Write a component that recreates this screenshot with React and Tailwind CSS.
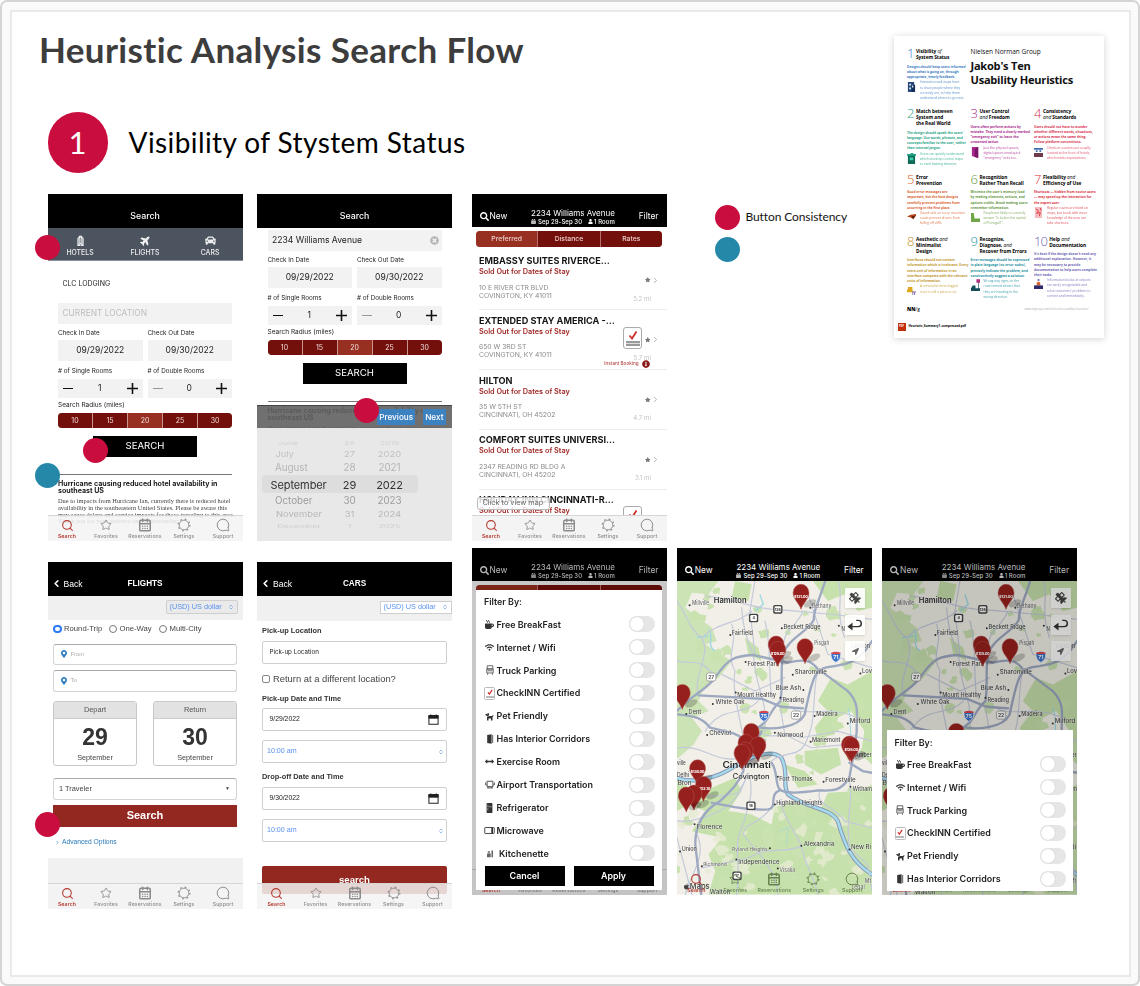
import React from "react";
import { Search, Star, CalendarDays, MessageCircle, ChevronLeft, ChevronRight, ChevronsUpDown } from "lucide-react";
import {
  FaSearch, FaPlane, FaCar, FaStar, FaCalendarAlt, FaUser, FaMugHot, FaWifi, FaDog,
  FaArrowsAltH, FaMapMarkerAlt, FaLocationArrow, FaSatellite, FaInfoCircle, FaApple, FaTimesCircle,
} from "react-icons/fa";

const Marker = ({ className }) => (
  <div className={`absolute z-20 size-[25px] rounded-full ${className}`} />
);

const Phone = ({ children, className = "", markers, font = "font-[Inter,sans-serif]" }) => (
  <div className="relative shrink-0">
    <div className={`relative flex h-[347px] w-[195px] flex-col overflow-hidden text-[#222] blur-[0.3px] ${font} ${className}`}>{children}</div>
    {markers}
  </div>
);

const Gear = () => (
  <svg viewBox="0 0 24 24" className="size-[14px]" fill="none" stroke="currentColor">
    <circle cx="12" cy="12" r="8.3" strokeWidth="1.5" />
    <circle cx="12" cy="12" r="10" strokeWidth="2" strokeDasharray="3 4.85" />
  </svg>
);

const TabBar = ({ className = "bg-[#f3f3f3]/85 text-[#8c8c8c]", border = "border-[#d5d5d5]" }) => {
  const tabs = [
    ["Search", <Search className="size-[13px]" strokeWidth={2} />],
    ["Favorites", <Star className="size-[12px]" strokeWidth={1.8} />],
    ["Reservations", <CalendarDays className="size-[14px]" strokeWidth={2.6} />],
    ["Settings", <Gear />],
    ["Support", <MessageCircle className="size-[14px] -scale-x-100" strokeWidth={1.7} />],
  ];
  return (
    <div className={`absolute bottom-0 left-0 grid h-[26px] w-[195px] grid-cols-5 border-t font-[Inter,sans-serif] ${border} ${className}`}>
      {tabs.map(([label, icon], i) => (
        <div key={label} className={`flex flex-col items-center pt-[2.500px] ${i === 0 ? "text-[#b5392f]" : ""}`}>
          <div className="flex h-[14px] items-center">{icon}</div>
          <div className={`text-[5.2px] leading-[8px] tracking-[0.1px] ${i === 0 ? "font-semibold" : "font-medium"}`}>{label}</div>
        </div>
      ))}
    </div>
  );
};

const PlainHeader = ({ title, back, bold }) => (
  <div className="relative flex h-[34px] shrink-0 items-end justify-center bg-black pb-[4.500px] text-white">
    {back && (
      <div className="absolute bottom-[5px] left-[3px] flex items-center text-[8.6px] leading-[14px]">
        <ChevronLeft className="size-[11px]" strokeWidth={3.5} />
        <span className="ml-[2px]">Back</span>
      </div>
    )}
    <div className={`leading-[14px] ${bold ? "text-[8.2px] font-semibold" : "text-[8.800px] font-medium"}`}>{title}</div>
  </div>
);

const TripHeader = ({ dim }) => (
  <div className="h-[33.5px] shrink-0 bg-black">
    <div className={`flex h-full items-end justify-between px-[8px] pb-[2px] ${dim ? "text-[#b9b9b9]" : "text-white"}`}>
      <div className="mb-[2.500px] flex w-[34px] items-center text-[8.4px] leading-[13px]">
        <FaSearch className="size-[9px]" />
        <span className="ml-[1px]">New</span>
      </div>
      <div className="text-center">
        <div className="text-[8px] leading-[9px] whitespace-nowrap">2234 Williams Avenue</div>
        <div className="flex items-center justify-center text-[6px] leading-[7px] font-medium tracking-[0.05px] whitespace-nowrap">
          <FaCalendarAlt className="mr-[2px] size-[5px]" />
          Sep 29-Sep 30
          <FaUser className="ml-[6px] mr-[1px] size-[5px]" />1 Room
        </div>
      </div>
      <div className="mb-[2.500px] w-[26px] text-right text-[8.4px] leading-[13px]">Filter</div>
    </div>
  </div>
);

const Stepper = ({ value, dimMinus }) => (
  <div className="flex h-[19.5px] w-[84.5px] items-center justify-between bg-[#f2f2f2] px-[5px]">
    <div className={`h-[1.3px] w-[10px] ${dimMinus ? "bg-[#999]" : "bg-[#111]"}`} />
    <div className="text-[8.5px]">{value}</div>
    <svg className="size-[11px]" viewBox="0 0 11 11"><path d="M5.5 0v11M0 5.5h11" stroke="#111" strokeWidth="1.6" /></svg>
  </div>
);

const SearchForm = ({ location }) => (
  <div className="px-[10.5px]">
    {location ? (
      <div className="flex h-[21.5px] items-center justify-between bg-[#f2f2f2] pt-px pr-[3px] pl-[4.5px] text-[8.600px]">
        2234 Williams Avenue
        <FaTimesCircle className="size-[9px] text-[#b5b5b5]" />
      </div>
    ) : (
      <div className="flex h-[21.5px] items-center bg-[#f2f2f2] pt-px pl-[4.5px] text-[8.4px] text-[#bdbdbd]">CURRENT LOCATION</div>
    )}
    <div className="grid h-[15.5px] grid-cols-2 items-center gap-[5px] pt-[3px] text-[6.3px]"><span>Check In Date</span><span>Check Out Date</span></div>
    <div className="grid grid-cols-2 gap-[5px] text-center text-[8.5px] leading-[21px]">
      <div className="h-[21px] bg-[#f2f2f2]">09/29/2022</div>
      <div className="h-[21px] bg-[#f2f2f2]">09/30/2022</div>
    </div>
    <div className="grid h-[18px] grid-cols-2 items-center gap-[5px] pt-[4.500px] text-[6.3px]"><span># of Single Rooms</span><span># of Double Rooms</span></div>
    <div className="grid grid-cols-2 gap-[5px]"><Stepper value="1" /><Stepper value="0" dimMinus /></div>
    <div className="flex h-[15px] items-center pt-[1px] text-[6.5px]">Search Radius (miles)</div>
    <div className="grid h-[15px] grid-cols-5 gap-px overflow-hidden rounded-[4px] bg-[#c9958f] text-center text-[7px] leading-[15px] text-[#f0dcd9]">
      {[10, 15, 20, 25, 30].map((n) => (
        <div key={n} className={n === 20 ? "bg-[#983022]" : "bg-[#74100b]"}>{n}</div>
      ))}
    </div>
    <div className="mx-auto mt-[7.500px] flex h-[21px] w-[104px] items-center justify-center bg-black pt-px text-[9.6px] text-white">SEARCH</div>
    <div className="mt-[17.5px] h-px bg-[#777]" />
    <div className="mt-[4.500px] text-[7.05px] leading-[7.800px] font-bold whitespace-nowrap">Hurricane causing reduced hotel availability in<br />southeast US</div>
    <div className="mt-[3px] font-['Liberation_Serif',serif] text-[6.4px] leading-[6.8px] whitespace-nowrap text-[#444]">
      Due to impacts from Hurricane Ian, currently there is reduced hotel<br />
      availability in the southeastern United States. Please be aware this<br />
      may cause delays and service impacts for those traveling to this area.<br />
      Thank you for your patience and understanding.
    </div>
  </div>
);

const HotelsScreen = () => (
  <Phone
    className="bg-white"
    markers={<><Marker className="top-[41px] left-[-13px] bg-[#c90d3f]" /><Marker className="top-[244px] left-[35px] bg-[#c90d3f]" /><Marker className="top-[269px] left-[-12.5px] bg-[#2588a8]" /></>}
  >
    <PlainHeader title="Search" />
    <div className="grid h-[33.5px] shrink-0 grid-cols-3 border-b border-[#8b9198] bg-[#4b545f] text-center text-[6.9px] leading-[9px] font-medium text-[#eee]">
      <div className="flex flex-col items-center gap-[2px] pt-[7.500px]">
        <svg viewBox="0 0 10 14" className="h-[11px] w-[9px]"><path d="M1 14V4L3 2V1h4v1l2 2v10Z" fill="#eee" /><path d="M3 4v8M5 3v7M7 4v8M5 11.500v2.500" stroke="#4b545f" strokeWidth=".7" /></svg>
        HOTELS
      </div>
      <div className="flex flex-col items-center gap-[2px] pt-[7.500px]"><FaPlane className="size-[11px] -rotate-45" />FLIGHTS</div>
      <div className="flex flex-col items-center gap-[2px] pt-[7.500px]"><FaCar className="size-[11px]" />CARS</div>
    </div>
    <div className="h-[41.5px] shrink-0 pt-[17.500px] pl-[15px] text-[7px] leading-[10px]">CLC LODGING</div>
    <SearchForm />
    <TabBar />
  </Phone>
);

const PICKER = [
  ["June", 26, 2019, "h-[9px] text-[8.6px] text-[#d3d3d3] scale-y-[0.6]", "pl-[21px]"],
  ["July", 27, 2020, "h-[13px] text-[9.4px] text-[#c2c2c2] scale-y-[0.85]", "pl-[18.500px]"],
  ["August", 28, 2021, "h-[15px] text-[9.8px] text-[#b4b4b4]", "pl-[18px]"],
  ["September", 29, 2022, "h-[18px] text-[11px] text-[#333] tracking-[-0.1px]", "pl-[13.500px]"],
  ["October", 30, 2023, "h-[14.500px] text-[9.8px] text-[#9c9c9c]", "pl-[18px]"],
  ["November", 31, 2024, "h-[13px] text-[9.4px] text-[#b6b6b6] scale-y-[0.8]", "pl-[19px]"],
  ["December", 1, 2025, "h-[8px] text-[8.8px] text-[#cdcdcd] scale-y-[0.5]", "pl-[20.500px]"],
];

const DateScreen = () => (
  <Phone className="bg-white" markers={<Marker className="top-[204px] left-[96.500px] bg-[#c90d3f]" />}>
    <PlainHeader title="Search" />
    <div className="h-[2px] shrink-0" />
    <SearchForm location />
    <div className="absolute bottom-0 left-0 flex h-[136px] w-[195px] flex-col">
      <div className="flex h-[23.5px] shrink-0 items-center justify-end gap-[8px] border-t border-[#444] bg-[#606060]/90 pr-[6.5px] text-[8.2px] font-medium text-white">
        <div className="bg-[#3c82c1] px-[2px] leading-[16px]">Previous</div>
        <div className="bg-[#3c82c1] px-[2px] leading-[16px]">Next</div>
      </div>
      <div className="relative flex flex-1 flex-col bg-[#e8e8e8] pt-[11px]">
        <div className="absolute top-[47px] left-[5px] h-[18px] w-[156px] rounded-[4px] bg-[#dddddd]" />
        {PICKER.map(([m, d, y, cls, pl]) => (
          <div key={m} className={`relative flex shrink-0 items-center ${cls}`}>
            <span className={`w-[80px] ${pl}`}>{m}</span>
            <span className="w-[25px] text-center">{d}</span>
            <span className="w-[55px] text-center">{y}</span>
          </div>
        ))}
      </div>
    </div>
  </Phone>
);

const Badge = ({ className = "" }) => (
  <div className={`flex h-[22px] w-[19px] flex-col items-center justify-between rounded-[3px] border border-[#aaa] bg-white pt-[2px] pb-[2px] ${className}`}>
    <svg viewBox="0 0 10 10" className="size-[10px]"><path d="M1.500 5.500L4 8.500L8.500 1.500" fill="none" stroke="#cf2a27" strokeWidth="1.8" /></svg>
    <div className="h-[5px] w-[14px] border-y-2 border-[#999] bg-[#ddd]" />
  </div>
);

const HOTELS = [
  ["EMBASSY SUITES RIVERCE...", "10 E RIVER CTR BLVD", "COVINGTON, KY 41011", "5.2 mi"],
  ["EXTENDED STAY AMERICA -...", "650 W 3RD ST", "COVINGTON, KY 41011", "5.7 mi", true],
  ["HILTON", "35 W 5TH ST", "CINCINNATI, OH 45202", "4.7 mi"],
  ["COMFORT SUITES UNIVERSI...", "2347 READING RD BLDG A", "CINCINNATI, OH 45202", "3.1 mi"],
  ["HOLIDAY INN CINCINNATI-R...", "", "", "", true],
];

const ListScreen = () => (
  <Phone className="bg-white">
    <TripHeader />
    <div className="mx-[4.5px] mt-[3.500px] grid h-[16px] shrink-0 grid-cols-3 gap-px overflow-hidden rounded-[4px] bg-[#b5706a] text-center text-[6.8px] leading-[16px] font-medium text-[#eccfcc]">
      <div className="bg-[#983022]">Preferred</div><div className="bg-[#74100b]">Distance</div><div className="bg-[#74100b]">Rates</div>
    </div>
    <div className="mt-[4px] ml-[7.5px]">
      {HOTELS.map(([name, a1, a2, mi, badge]) => (
        <div key={name} className="relative h-[59.8px] border-b border-[#ececec] pt-[4.500px] whitespace-nowrap">
          <div className="text-[9.15px] leading-[12px] font-bold text-[#151515]">{name}</div>
          <div className="text-[7.3px] leading-[10px] font-semibold text-[#a02c28]">Sold Out for Dates of Stay</div>
          <div className="mt-[6.500px] text-[6.8px] leading-[8px] text-[#8a8a8a]">{a1}<br />{a2}</div>
          {badge && <Badge className="absolute top-[16.500px] left-[144px]" />}
          {mi && (
            <>
              <div className="absolute top-[25px] right-[7px] flex items-center text-[#999]">
                <FaStar className="size-[5.500px] text-[#777]" /><ChevronRight className="size-[9px]" strokeWidth={2} />
              </div>
              <div className="absolute top-[43px] right-[15.5px] text-[6.2px] leading-[9px] text-[#c4c4c4]">{mi}</div>
            </>
          )}
          {badge && mi && (
            <div className="absolute top-[50px] right-[17px] flex items-center gap-[3px] text-[4.6px] leading-[8px] font-medium text-[#b34a47]">
              Instant Booking <FaInfoCircle className="size-[8px] text-[#8b1a16]" />
            </div>
          )}
        </div>
      ))}
    </div>
    <div className="absolute top-[303.500px] left-[5px] flex h-[12.500px] w-[73.5px] items-center rounded-[3px] border border-[#bbb] bg-white/80 pl-[5px] text-[7.3px] whitespace-nowrap text-[#666]">Click to view map</div>
    <TabBar className="bg-[#f4f4f4] text-[#8c8c8c]" />
  </Phone>
);

const DateCard = ({ label, day }) => (
  <div className="flex h-[65.5px] w-[84px] flex-col items-center rounded-[3px] border border-[#c9c9c9] bg-white">
    <div className="w-full border-b border-[#ccc] bg-[#e2e2e2] text-center text-[7.4px] leading-[16px] text-[#555]">{label}</div>
    <div className="mt-[5px] text-[23px] leading-[26px] font-bold text-[#333]">{day}</div>
    <div className="text-[7.3px] leading-[16px] text-[#444]">September</div>
  </div>
);

const Radio = ({ label, on, className = "" }) => (
  <div className={`flex items-center gap-[2.500px] text-[7.7px] whitespace-nowrap text-[#444] ${className}`}>
    <span className={`size-[8.5px] shrink-0 rounded-full ${on ? "border-[2.6px] border-[#2f7af5]" : "border border-[#777]"}`} />
    {label}
  </div>
);

const ARIAL = "font-['Liberation_Sans',sans-serif]";

const FlightsScreen = () => (
  <Phone className="bg-white" font={ARIAL} markers={<Marker className="top-[250.5px] left-[-12.5px] bg-[#c90d3f]" />}>
    <PlainHeader title="FLIGHTS" back bold />
    <div className="flex h-[24.5px] shrink-0 justify-end bg-[#f0f0f0] pt-[4.500px] pr-[5px]">
      <div className="flex h-[14px] w-[72px] items-center justify-between rounded-[2px] border border-[#cfcfcf] bg-[#eaeaea] pr-[3px] pl-[3px] text-[7.3px] text-[#5b91ee]">
        (USD) US dollar <ChevronsUpDown className="size-[6px]" strokeWidth={2.500} />
      </div>
    </div>
    <div className="flex h-[23.5px] shrink-0 pb-[6px] pl-[5.5px]">
      <Radio label="Round-Trip" on className="w-[55.5px]" />
      <Radio label="One-Way" className="w-[50px]" />
      <Radio label="Multi-City" />
    </div>
    <div className="flex flex-col px-[5.5px]">
      {["From", "To"].map((t) => (
        <div key={t} className="mb-[5px] flex h-[21.5px] items-center gap-[2.500px] rounded-[3px] border border-t-[1.500px] border-[#d4d4d4] border-t-[#aaa] pl-[6px] text-[5.8px] text-[#aaa]">
          <FaMapMarkerAlt className="size-[8px] text-[#2f7fc0]" />{t}
        </div>
      ))}
      <div className="mt-[4px] flex justify-between"><DateCard label="Depart" day="29" /><DateCard label="Return" day="30" /></div>
      <div className="mt-[12px] flex h-[21.5px] items-center justify-between rounded-[3px] border border-t-[1.500px] border-[#d4d4d4] border-t-[#aaa] pr-[6px] pl-[5px] text-[7.4px] text-[#444]">
        1 Traveler<span className="text-[5px]">▼</span>
      </div>
      <div className="mt-[5px] flex h-[22px] items-center justify-center bg-[#92281f] text-[11px] font-bold text-white">Search</div>
      <div className="mt-[12px] flex h-[8px] items-center gap-[2px] pl-[2px] text-[6.7px] text-[#2a7ab8]"><ChevronRight className="size-[5px]" strokeWidth={3} />Advanced Options</div>
    </div>
    <div className="mt-[11px] flex-1 bg-[#f1f1f1]" />
    <TabBar />
  </Phone>
);

const Field = ({ children, className = "" }) => (
  <div className={`flex h-[23px] items-center justify-between rounded-[2px] border border-[#cfcfcf] ${className}`}>{children}</div>
);
const Label = ({ children, className = "" }) => (
  <div className={`flex items-center text-[7.4px] font-bold text-[#333] ${className}`}>{children}</div>
);
const TimeField = ({ className }) => (
  <Field className={`pr-[2.500px] pl-[4px] text-[7.1px] text-[#5b91ee] ${className}`}>10:00 am<ChevronsUpDown className="size-[6px]" strokeWidth={2.500} /></Field>
);
const CalIcon = () => (
  <svg viewBox="0 0 12 12" className="size-[11px]"><path d="M1 2h10v9.200H1Z" fill="none" stroke="#222" strokeWidth="1.100" /><path d="M1 1.700h10v2.800H1ZM3 .4v2M9 .4v2" fill="#222" stroke="#222" /></svg>
);

const CarsScreen = () => (
  <Phone className="bg-white" font={ARIAL}>
    <PlainHeader title="CARS" back bold />
    <div className="flex h-[25px] shrink-0 justify-end bg-[#f0f0f0] pt-[5px]">
      <div className="flex h-[13.5px] w-[72.5px] items-center justify-between border border-[#cfcfcf] bg-white px-[3px] text-[7.3px] text-[#5b91ee]">
        (USD) US dollar <ChevronsUpDown className="size-[6px]" strokeWidth={2.500} />
      </div>
    </div>
    <div className="px-[5px]">
      <Label className="h-[20px] pt-px">Pick-up Location</Label>
      <Field className="pl-[6.500px] font-[Inter,sans-serif] text-[6.2px]">Pick-up Location</Field>
      <div className="flex h-[31px] items-center gap-[3px] text-[9.4px] whitespace-nowrap text-[#444]"><span className="size-[8px] rounded-[2px] border border-[#888]" />Return at a different location?</div>
      <Label className="h-[13.500px] pb-[5px]">Pick-up Date and Time</Label>
      <Field className="pr-[7px] pl-[6.500px] text-[6.8px]">9/29/2022<CalIcon /></Field>
      <TimeField className="mt-[9px]" />
      <Label className="h-[24px] pt-[4px]">Drop-off Date and Time</Label>
      <Field className="pr-[7px] pl-[6.500px] text-[6.8px]">9/30/2022<CalIcon /></Field>
      <TimeField className="mt-[9px]" />
      <div className="mt-[24px] flex h-[28px] items-center justify-center rounded-[2px] bg-[#92281f] text-[9.6px] font-bold text-white">search</div>
    </div>
    <TabBar />
  </Phone>
);

const ic = "size-[9px] text-[#333]";
const FILTERS = [
  ["Free BreakFast", <FaMugHot className={ic} />],
  ["Internet / Wifi", <FaWifi className={ic} />],
  ["Truck Parking", <svg viewBox="0 0 10 12" className="h-[10px] w-[8px]" fill="none" stroke="#444"><path d="M1.500 .7h7v4h-7ZM1 4.700h8v5H1ZM2 7h6M2 10v2M8 10v2" /></svg>],
  ["CheckINN Certified", <div className="flex h-[13px] w-[11px] flex-col items-center rounded-[1.500px] border border-[#bbb] bg-white pt-px"><svg viewBox="0 0 10 10" className="size-[6px]"><path d="M1.500 5.500L4 8.500L8.500 1.500" fill="none" stroke="#cf2a27" strokeWidth="2" /></svg><div className="mt-px h-[2px] w-[8px] bg-[#bbb]" /></div>],
  ["Pet Friendly", <FaDog className="size-[9px] -scale-x-100 text-[#333]" />],
  ["Has Interior Corridors", <svg viewBox="0 0 10 12" className="h-[10px] w-[8px]"><path d="M1.500 1L7 0v12L1.500 11Z" fill="#333" /><path d="M7.500 1H9v10H7.500" fill="#777" /></svg>],
  ["Exercise Room", <FaArrowsAltH className={ic} />],
  ["Airport Transportation", <svg viewBox="0 0 12 12" className="size-[10px]" fill="none" stroke="#444" strokeWidth="1.100"><path d="M2.500 1.500h7v6.500h-7ZM.8 3v3M11.200 3v3M3.500 8v2.500M8.500 8v2.500M2.500 6h-1M10.500 6h-1M4 9.500h4" /></svg>],
  ["Refrigerator", <svg viewBox="0 0 8 12" className="h-[10px] w-[7px]"><rect x=".5" width="7" height="12" rx="1" fill="#333" /><path d="M1 4.500h6M2 2v1.500M2 6v3" stroke="#ccc" strokeWidth=".7" /></svg>],
  ["Microwave", <svg viewBox="0 0 12 8" className="h-[7px] w-[11px]"><rect x=".6" y=".6" width="10.800" height="6.800" rx=".6" fill="none" stroke="#333" /><path d="M9 .6v6.800" stroke="#333" strokeWidth="2" /></svg>],
  ["Kitchenette", <svg viewBox="0 0 10 12" className="h-[9px] w-[8px]" fill="#666"><path d="M1 6h5v5H1ZM7 2h2v9H7ZM2 3h3v1.500H2ZM3 4h1v2H3Z" /></svg>],
];

const FilterRows = ({ rows }) => rows.map(([label, icon]) => (
  <div key={label} className="flex h-[22.9px] items-center pl-[7px]">
    <div className="flex w-[13.5px] justify-center">{icon}</div>
    <div className={`flex-1 text-[8.95px] font-semibold whitespace-nowrap text-[#222] ${label === "Kitchenette" ? "pl-[2.500px]" : ""}`}>{label}</div>
    <div className="mr-[7px] h-[16px] w-[26px] rounded-full bg-[#e6e6e6] p-[1px]"><div className="size-[14px] rounded-full bg-white shadow-[0_0_1px_rgba(0,0,0,0.25)]" /></div>
  </div>
));

const FilterScreen = () => (
  <Phone className="bg-[#c8c8c8]">
    <TripHeader dim />
    <div className="mx-[4.5px] mt-[3.500px] grid h-[6px] shrink-0 grid-cols-3 gap-px overflow-hidden rounded-t-[4px] bg-[#a0605a]">
      <div className="bg-[#7b2618]" /><div className="bg-[#5f0c08]" /><div className="bg-[#5f0c08]" />
    </div>
    <div className="relative z-10 mx-[4.5px] -mt-px h-[300.500px] bg-white pt-[5.500px]">
      <div className="h-[18px] pl-[8px] text-[8.900px] leading-[13px] font-semibold">Filter By:</div>
      <FilterRows rows={FILTERS} />
      <div className="mt-[1px] grid grid-cols-2 gap-[9px] px-[8.5px] text-center text-[8.9px] leading-[20px] font-semibold text-white">
        <div className="bg-black">Cancel</div><div className="bg-black">Apply</div>
      </div>
    </div>
    <TabBar className="bg-[#c4c4c4] text-[#777]" border="border-[#aaa]" />
  </Phone>
);

const rng = (() => { let s = 7; return () => ((s = (s * 16807) % 2147483647) / 2147483647); })();
const blob = (cx, cy, r) => {
  let d = "";
  const n = 9;
  for (let i = 0; i < n; i++) {
    const a = (i / n) * Math.PI * 2;
    const k = r * (0.45 + rng() * 0.8);
    d += `${i ? "L" : "M"}${(cx + Math.cos(a) * k).toFixed(0)} ${(cy + Math.sin(a) * k * 0.9).toFixed(0)}`;
  }
  return d + "Z";
};
const GREENS = Array.from({ length: 70 }, () => blob(15 + rng() * 588, 110 + rng() * 940, 8 + rng() * 17));
const CLEARINGS = Array.from({ length: 34 }, () => blob(15 + rng() * 588, 780 + rng() * 270, 8 + rng() * 16));

const PLACES = [
  ["Hamilton", 126, 177, 23, 99, 600], ["Millville", 60, 182, 17, 52], ["Bethany", 422, 192, 17, 58], ["Beckett Ridge", 336, 253, 19, 112],
  ["Fairfield", 180, 273, 18, 64], ["Pisgah", 429, 301, 17, 45], ["Forest Park", 228, 364, 19, 95], ["Sharonville", 370, 390, 19, 97],
  ["Landon", 539, 311, 19, 58], ["Lov", 573, 386, 19, 30], ["Blue Ash", 313, 436, 19, 76], ["Mount Healthy", 197, 457, 19, 116],
  ["Reading", 333, 473, 18, 65], ["White Oak", 131, 479, 19, 88], ["Dent", 50, 510, 18, 38], ["Madeira", 435, 515, 18, 64],
  ["Milford", 536, 536, 19, 62], ["Cheviot", 112, 571, 19, 67], ["Norwood", 317, 579, 19, 79], ["Mariemont", 422, 592, 18, 86],
  ["Amber", 552, 637, 18, 50], ["ville", 15, 661, 18, 26], ["Delhi", 15, 698, 18, 36], ["Bron", 17, 721, 18, 42], ["Cincinnati", 152, 670, 27, 146, 600],
  ["Covington", 183, 703, 21, 111, 500], ["Fort Thomas", 323, 711, 19, 101], ["Forestville", 462, 712, 19, 92], ["Witham", 545, 739, 18, 58],
  ["Highland Heights", 314, 782, 18, 140], ["Florence", 74, 855, 19, 78], ["Alexandria", 397, 904, 19, 92], ["Union", 29, 921, 18, 46],
  ["Ryland Heights", 181, 920, 16, 107], ["New Ri", 540, 914, 19, 60], ["Independence", 200, 959, 19, 124], ["Richmond", 94, 965, 16, 71],
  ["Visalia", 324, 984, 17, 47], ["Walton", 114, 1050, 19, 62], ["Legal", 541, 1034, 17, 40], ["Mt", 581, 1015, 17, 20], ["N", 511, 260, 18, 10],
];
const DOTS = [[53, 183], [417, 190], [331, 252], [176, 272], [222, 353], [364, 391], [396, 437], [192, 444], [327, 460], [123, 479], [43, 509], [430, 515], [530, 537], [106, 572], [310, 565], [418, 592], [319, 697], [457, 712], [538, 727], [310, 780], [68, 839], [390, 904], [24, 921], [295, 911], [535, 915], [194, 945], [90, 965], [319, 972], [503, 244], [568, 387]];
const MAJOR = [
  "M462 110C440 180 425 200 428 225C415 260 350 280 335 330C326 370 335 420 327 470C290 500 300 530 250 555C215 580 220 640 215 680C200 720 170 745 145 770C90 800 70 850 70 900L88 1050",
  "M15 500C60 450 100 440 130 400C170 340 190 335 245 332L350 355C410 340 425 355 440 375C480 400 500 420 530 440C570 480 555 520 557 560C550 640 540 660 535 700C505 745 480 738 440 738C390 745 340 750 325 735C310 720 320 680 300 655",
  "M603 290C560 360 520 360 490 365C430 370 425 390 400 510C380 550 300 560 245 545",
  "M80 453L270 463L330 487L395 492",
  "M15 510C70 515 90 520 115 550C150 560 190 560 215 585C225 600 260 590 270 560",
  "M120 775C200 790 230 797 290 795C320 790 290 750 325 738",
  "M535 655L575 680L603 685",
];
const MINOR = [
  "M15 170C50 220 55 260 90 280C120 330 60 400 80 453", "M100 155C210 165 230 195 350 198L500 212L603 225", "M180 240C200 300 160 330 190 380C180 430 200 500 215 580",
  "M210 190C215 280 240 300 248 350C252 430 290 470 280 560", "M250 110L235 200L250 330", "M280 230C300 300 290 370 300 460", "M395 200C370 260 330 250 335 330",
  "M410 150L470 330L603 370", "M440 375C420 450 440 530 400 600C380 640 330 620 300 650", "M260 470C210 520 150 480 100 560", "M327 490L340 570L420 610L530 600",
  "M250 560C300 590 350 560 390 580L500 560L603 590", "M340 400L250 440L150 390", "M15 610C100 600 130 660 215 640", "M15 760C80 740 120 770 200 745L230 690",
  "M235 700C245 760 230 780 215 840C180 900 210 950 195 1050", "M225 690C200 800 100 820 50 830L15 830", "M15 880L60 1050", "M70 860C110 930 60 980 40 1050", "M325 770C350 850 380 870 390 905C400 960 430 1000 440 1050",
  "M300 790C250 850 220 830 215 870C250 920 310 960 320 1050", "M445 745C430 780 500 790 520 830L603 850", "M535 710C550 780 520 800 535 910L590 960L603 1040", "M390 905C340 930 300 900 230 940L90 970", "M15 350C70 360 90 340 130 400",
  "M360 490C400 520 470 480 557 520", "M240 200C200 240 140 230 90 280", "M500 110C520 150 490 200 520 280",
];
const PINS = [
  [389, 195, "$131.00"], [314, 350], [319, 366, "$125.00"], [401, 358], [31, 495], [239, 612], [223, 645], [259, 652], [221, 668], [211, 675],
  [535, 650], [541, 654, "$135.00"], [77, 721, "$136.00"], [95, 771, "$103.10"], [66, 797], [43, 803],
];

const MapArt = () => (
  <svg viewBox="15 110 588 940" preserveAspectRatio="none" className="h-full w-full font-[Inter,sans-serif]">
    <rect x="15" y="110" width="588" height="940" fill="#f1efe7" />
    <g fill="#c6e1ab">
      <path d="M15 110H140L110 150L60 145L40 190L120 250L135 290L100 300L180 350L140 400L95 430L80 470L110 500L60 520L90 560L65 600L20 640H15Z" opacity=".85" />
      <path d="M15 700L60 740L120 730L190 700L210 740L170 800L240 810L300 840L310 790L360 770L450 790L470 745L560 740L603 720V1050H110L130 980L110 930L150 880L60 860L100 800L50 780L15 800Z" />
      <path d="M425 110H603V190L560 200L520 150L470 170L440 130ZM480 400L530 420L603 380V660L570 630L580 560L540 500L500 520L490 570L440 580L430 550L470 500L440 470Z" />
      <path d="M190 110L240 120L230 170L180 160ZM220 280L260 310L270 350L230 330ZM400 620L500 610L510 660L450 690L400 660ZM340 660L400 680L440 720L380 730Z" />
    </g>
    {GREENS.map((d, i) => <path key={i} d={d} fill="#c9e2b0" />)}
    {CLEARINGS.map((d, i) => <path key={i} d={d} fill="#e6ebd2" opacity=".8" />)}
    <g fill="none" stroke="#9bd8e6" strokeWidth="4">
      <path d="M110 255C130 280 100 300 130 320" /><path d="M265 150L275 180L250 200" /><path d="M530 490C545 520 530 560 545 600" strokeWidth="3" /><path d="M320 860L350 850L345 900" strokeWidth="2" /><path d="M75 280L110 275" />
    </g>
    <g fill="none" strokeLinecap="round">
      <path d="M15 700C60 720 140 700 190 665C230 640 300 610 330 640C355 690 330 720 350 750C400 790 480 790 500 830C520 900 540 950 603 990" stroke="#8c99b8" strokeWidth="13" />
      <path d="M15 700C60 720 140 700 190 665C230 640 300 610 330 640C355 690 330 720 350 750C400 790 480 790 500 830C520 900 540 950 603 990" stroke="#a4dcec" strokeWidth="7" />
      {MINOR.map((d) => <path key={d} d={d} stroke="#c3c9da" strokeWidth="3.500" />)}
      {MAJOR.map((d) => <path key={d} d={d} stroke="#9da8c1" strokeWidth="7" />)}
    </g>
    {DOTS.map(([x, y]) => <circle key={`${x}-${y}`} cx={x} cy={y} r="3" fill="#333" />)}
    <g fill="#444" stroke="#fff" strokeWidth="2" strokeOpacity=".6" paintOrder="stroke">
      {PLACES.map(([t, x, y, s, w, fw]) => (
        <text key={t} x={x} y={y} fontSize={s} textLength={w} lengthAdjust="spacingAndGlyphs" fontWeight={fw || 450} fill={s > 20 ? "#2b2b2b" : s < 18 ? "#707070" : "#484848"}>{t}</text>
      ))}
    </g>
    {[[319, 195, "126"], [246, 221, "4"], [238, 784, "16"], [196, 994, "17"]].map(([x, y, t]) => (
      <g key={t}><rect x={x - 14} y={y - 13} width="28" height="26" rx="5" fill="#444" /><rect x={x - 10} y={y - 9} width="20" height="18" rx="4" fill="#fff" /><text x={x} y={y + 4} fontSize="11" fontWeight="700" textAnchor="middle" fill="#333">{t}</text></g>
    ))}
    {[[118, 398, "27"], [374, 512, "22"]].map(([x, y, t]) => (
      <g key={t}><rect x={x - 14} y={y - 12} width="28" height="24" rx="6" fill="#fff" stroke="#888" strokeWidth="2" /><text x={x} y={y + 5} fontSize="15" fontWeight="600" textAnchor="middle" fill="#444">{t}</text></g>
    ))}
    {[[494, 337, "71"], [277, 514, "75"]].map(([x, y, t]) => (
      <g key={t}><path d={`M${x - 14} ${y - 12}Q${x} ${y - 18} ${x + 14} ${y - 12}Q${x + 18} ${y + 8} ${x} ${y + 17}Q${x - 18} ${y + 8} ${x - 14} ${y - 12}Z`} fill="#3d73c9" stroke="#fff" strokeWidth="2" /><path d={`M${x - 14} ${y - 12}Q${x} ${y - 18} ${x + 14} ${y - 12}L${x + 14} ${y - 8}H${x - 14}Z`} fill="#d9474b" /><text x={x} y={y + 8} fontSize="15" fontWeight="700" textAnchor="middle" fill="#fff">{t}</text></g>
    ))}
    {PINS.map(([x, y, p]) => (
      <g key={`${x}-${y}`}>
        <ellipse cx={x + 27} cy={y - 18} rx="20" ry="10" transform={`rotate(-25 ${x + 27} ${y - 18})`} fill="#000" opacity=".2" />
        <path d={`M${x} ${y}C${x - 5} ${y - 18} ${x - 24} ${y - 30} ${x - 24} ${y - 50}A24 25 0 0 1 ${x + 24} ${y - 50}C${x + 24} ${y - 30} ${x + 5} ${y - 18} ${x} ${y}Z`} fill="#96201d" stroke="#b45753" strokeWidth="1.500" />
        {p && <text x={x} y={y - 34} fontSize="12" fontWeight="700" textAnchor="middle" textLength="42" fill="#fff">{p}</text>}
      </g>
    ))}
  </svg>
);

const ReturnIcon = () => (
  <svg viewBox="0 0 20 20" className="size-[16px]" fill="none" stroke="#333" strokeWidth="1.800"><path d="M2 12H14A3.900 3.900 0 0 0 14 4.200H11.500" /><path d="M6 9L2 12L6 15Z" fill="#333" /></svg>
);
const MapButtons = () => (
  <div className="absolute top-[40.5px] right-[6.5px] flex flex-col gap-[6.5px]">
    {[<FaSatellite className="size-[12px] -scale-x-100 text-[#444]" />, <ReturnIcon />, <FaLocationArrow className="size-[7px] text-[#666]" />].map((icon, i) => (
      <div key={i} className="flex size-[20px] items-center justify-center rounded-[1px] bg-white/90 shadow-sm">{icon}</div>
    ))}
  </div>
);

const MapScreen = ({ filter }) => (
  <Phone>
    <TripHeader dim={filter} />
    <div className="relative flex-1"><div className="absolute inset-0"><MapArt /></div></div>
    <MapButtons />
    {!filter && (
      <>
        <div className="absolute bottom-[3px] left-[6px] flex items-center text-[7.500px] leading-[10px] font-medium text-[#444]"><FaApple className="size-[7px]" />Maps</div>
        <TabBar className="text-[#67824f]" border="border-transparent" />
      </>
    )}
    {filter && (
      <>
        <div className="absolute inset-x-0 top-[33.5px] bottom-0 bg-black/18" />
        <TabBar className="text-[#5f7a49]" border="border-transparent" />
        <div className="absolute bottom-[4px] left-[4.5px] h-[160.500px] w-[186px] overflow-hidden bg-white pt-[5.500px]">
          <div className="h-[17.5px] pl-[8px] text-[8.900px] leading-[13px] font-semibold">Filter By:</div>
          <FilterRows rows={FILTERS.slice(0, 6)} />
        </div>
      </>
    )}
  </Phone>
);

const HEUR = [
  ["1", "text-[#3a7bc0]", <>Visibility <i className="font-normal">of</i><br />System Status</>, ["Designs should keep users informed", "about what is going on, through", "appropriate, timely feedback."], ["Interactive wall maps have", "to show people where they", "currently are, to help them", "understand where to go next."]],
  ["2", "text-[#1fa487]", <>Match between<br />System and<br />the Real World</>, ["The design should speak the users'", "language. Use words, phrases, and", "concepts familiar to the user, rather", "than internal jargon."], ["Users can quickly understand", "which stovetop control maps", "to each heating element."]],
  ["3", "text-[#a8288c]", <>User Control<br /><i className="font-normal">and</i> Freedom</>, ["Users often perform actions by", "mistake. They need a clearly marked", "\"emergency exit\" to leave the", "unwanted action."], ["Just like physical spaces,", "digital spaces need quick", "\"emergency\" exits too."]],
  ["4", "text-[#d8304f]", <>Consistency<br /><i className="font-normal">and</i> Standards</>, ["Users should not have to wonder", "whether different words, situations,", "or actions mean the same thing.", "Follow platform conventions."], ["Check-in counters are usually", "located at the front of hotels,", "which meets expectations."]],
  ["5", "text-[#d9602f]", <>Error<br />Prevention</>, ["Good error messages are", "important, but the best designs", "carefully prevent problems from", "occurring in the first place."], ["Guard rails on curvy mountain", "roads prevent drivers from", "falling off cliffs."]],
  ["6", "text-[#649a3f]", <>Recognition<br />Rather Than Recall</>, ["Minimize the user's memory load", "by making elements, actions, and", "options visible. Avoid making users", "remember information."], ["People are likely to correctly", "answer \"Is Lisbon the capital", "of Portugal?\"."]],
  ["7", "text-[#d8303a]", <>Flexibility <i className="font-normal">and</i><br />Efficiency of Use</>, ["Shortcuts — hidden from novice users", "— may speed up the interaction for", "the expert user."], ["Regular routes are listed on", "maps, but locals with more", "knowledge of the area can", "take shortcuts."]],
  ["8", "text-[#c0962b]", <>Aesthetic <i className="font-normal">and</i><br />Minimalist<br />Design</>, ["Interfaces should not contain", "information which is irrelevant. Every", "extra unit of information in an", "interface competes with the relevant", "units of information."], ["A minimalist three-legged", "stool is still a place to sit."]],
  ["9", "text-[#1d8f9f]", <>Recognize,<br />Diagnose, <i className="font-normal">and</i><br />Recover from Errors</>, ["Error messages should be expressed", "in plain language (no error codes),", "precisely indicate the problem, and", "constructively suggest a solution."], ["Wrong-way signs on the", "road remind drivers that", "they are heading in the", "wrong direction."]],
  ["10", "text-[#6a63b5]", <>Help <i className="font-normal">and</i><br />Documentation</>, ["It's best if the design doesn't need any", "additional explanation. However, it", "may be necessary to provide", "documentation to help users complete", "their tasks."], ["Information kiosks at airports", "are easily recognizable and", "solve customers' problems in", "context and immediately."]],
];

const POSTER_ICONS = {
  1: <><path d="M1 2H8V13H1Z" fill="#274a7c" /><path d="M5 5h4v8H5Z" fill="#16305c" /><path d="M2.500 4h2v2h-2ZM5.500 6h1.500v2H5.500ZM2.500 8h2v2h-2Z" fill="#dfe9f5" /></>,
  2: <><path d="M1 3H9V13H1Z" fill="#0f6b57" /><path d="M0 2h4V1h3v1h3v2H0Z" fill="#1fa487" /><path d="M3 6h4v3H3Z" fill="#38d0ad" /></>,
  3: <><path d="M1 1L8 1V13L1 11Z" fill="#a8288c" /><path d="M4 3L8 1V13L4 12Z" fill="#7a1768" /></>,
  4: <><path d="M0 2H10V4H0ZM2 4.500h2v2H2ZM6 4.500h2v2H6Z" fill="#3f6fae" /><path d="M0 7.500H10V12H0Z" fill="#6d3b4c" /></>,
  5: <><path d="M0 6L4 4L10 3V5L7 9L4 7Z" fill="#b5431c" /><path d="M5 6L9 5L7 8.500Z" fill="#4a1c0e" /></>,
  6: <path d="M0 2H3L4 8H10V12H0Z" fill="#6fa548" />,
  7: <><path d="M1 1H9V13H1Z" fill="#f3bcc0" /><path d="M2 3L5 5L3 8L7 7L6 11M7 2L8 5" fill="none" stroke="#d8303a" /></>,
  8: <><path d="M1 3H6V7H7V9H0V6H1Z" fill="#e0a81e" /><path d="M6 8h4v1.200H9V12H8V9.200H7V12H6Z" fill="#7d6bb0" /></>,
  9: <><path d="M6 0h4v4H6Z" fill="#b3327f" /><path d="M7.800 4h.7v6H10v3H0V10L2 7H5V10H7.800Z" fill="#134e59" /></>,
  10: <><path d="M4 1h2v2H4Z" fill="#6a63b5" /><path d="M3 6a2 2 0 0 1 4 0v2H3Z" fill="#d9602f" /><path d="M0 8H10V12H0Z" fill="#2e2b6c" /></>,
};

const Heuristic = ({ item }) => {
  const [n, color, title, body, note] = item;
  return (
    <div className={`w-[63.5px] font-['Open_Sans','Noto_Sans',sans-serif] whitespace-nowrap ${color}`}>
      <div className="flex">
        <div className="mr-[2px] min-w-[7px] text-[13px] leading-[11px] font-light tracking-[-0.8px]">{n}</div>
        <div className="text-[4.8px] leading-[6.1px] font-bold tracking-[-0.05px] text-black">{title}</div>
      </div>
      <div className="mt-[4.500px] text-[3.25px] leading-[5.200px] font-bold">{body.map((l) => <div key={l}>{l}</div>)}</div>
      <div className="flex items-start gap-[4px] text-[3.2px] leading-[5.200px]">
        <svg viewBox="0 0 10 14" className="h-[13px] w-[9px] shrink-0">{POSTER_ICONS[n]}</svg>
        <div className="opacity-85">{note.map((l) => <div key={l}>{l}</div>)}</div>
      </div>
    </div>
  );
};

const Poster = () => (
  <div className="flex h-[302px] w-[210px] flex-col bg-white pt-[12.500px] pl-[13.500px] shadow-[0_1px_7px_rgba(0,0,0,0.18)]">
    <div className="flex h-[60px]">
      <Heuristic item={HEUR[0]} />
      <div className="font-['Open_Sans','Noto_Sans',sans-serif] whitespace-nowrap text-[#111]">
        <div className="text-[6.500px] leading-[8px]">Nielsen Norman Group</div>
        <div className="mt-[3px] text-[11.100px] leading-[14.200px] font-bold tracking-[-0.25px]">Jakob's Ten<br />Usability Heuristics</div>
      </div>
    </div>
    <div className="flex h-[65.5px]">{HEUR.slice(1, 4).map((h) => <Heuristic key={h[0]} item={h} />)}</div>
    <div className="flex h-[62px]">{HEUR.slice(4, 7).map((h) => <Heuristic key={h[0]} item={h} />)}</div>
    <div className="flex h-[70px]">{HEUR.slice(7).map((h) => <Heuristic key={h[0]} item={h} />)}</div>
    <div className="flex h-[8px] items-center justify-between pr-[15px] font-['Open_Sans',sans-serif]">
      <div className="text-[5px] font-extrabold text-black">NN<span className="font-normal">/g</span></div>
      <div className="text-[2.700px] text-[#aaa]">www.nngroup.com/articles/ten-usability-heuristics/</div>
    </div>
    <div className="mt-[9px] -ml-[9.500px] flex items-center gap-[3px] font-['Open_Sans',sans-serif] text-[3.100px] font-bold text-black">
      <div className="flex size-[8px] items-center justify-center bg-[#c5300c] text-[2.500px] text-white">PDF</div>
      Heuristic_Summary1-compressed.pdf
    </div>
  </div>
);

export default function App() {
  return (
    <div className="h-[986px] w-[1140px] overflow-hidden rounded-[7px] border-2 border-[#d4d4d4] bg-[#fafafa] p-[7.500px]">
      <div className="h-full w-full border-[2.500px] border-[#e9e9e9] bg-white font-[Lato,sans-serif]">
        <div className="flex h-[536px] pl-[36px]">
          <div className="w-[619px]">
            <h1 className="-ml-[8.500px] pt-[14px] text-[35px] leading-[46px] font-bold tracking-[0.350px] whitespace-nowrap text-[#3d3d3d]">Heuristic Analysis Search Flow</h1>
            <div className="mt-[40px] flex h-[61px] items-center gap-[21px]">
              <div className="flex h-[61px] w-[60px] items-center justify-center rounded-full bg-[#c90d3f] text-[31px] text-white">1</div>
              <h2 className="text-[28px] tracking-[0.420px] whitespace-nowrap text-black">Visibility of Stystem Status</h2>
            </div>
            <div className="mt-[21px] flex">
              <HotelsScreen />
              <div className="w-[14.500px]" />
              <DateScreen />
              <div className="w-[19.500px]" />
              <ListScreen />
            </div>
          </div>
          <div className="flex w-[227px] flex-col gap-[7.500px] pt-[193px] pl-[48px] text-[12px] tracking-[-0.100px] text-[#111]">
            <div className="flex items-center gap-[6px] whitespace-nowrap"><span className="size-[25px] rounded-full bg-[#c90d3f]" />Button Consistency</div>
            <span className="size-[25px] rounded-full bg-[#2588a8]" />
          </div>
          <div className="pt-[24px]"><Poster /></div>
        </div>
        <div className="flex items-start pl-[36px]">
          <div className="flex gap-[14.500px] pt-[14px]"><FlightsScreen /><CarsScreen /></div>
          <div className="ml-[19.500px] flex gap-[10.300px]"><FilterScreen /><MapScreen /><MapScreen filter /></div>
        </div>
      </div>
    </div>
  );
}
